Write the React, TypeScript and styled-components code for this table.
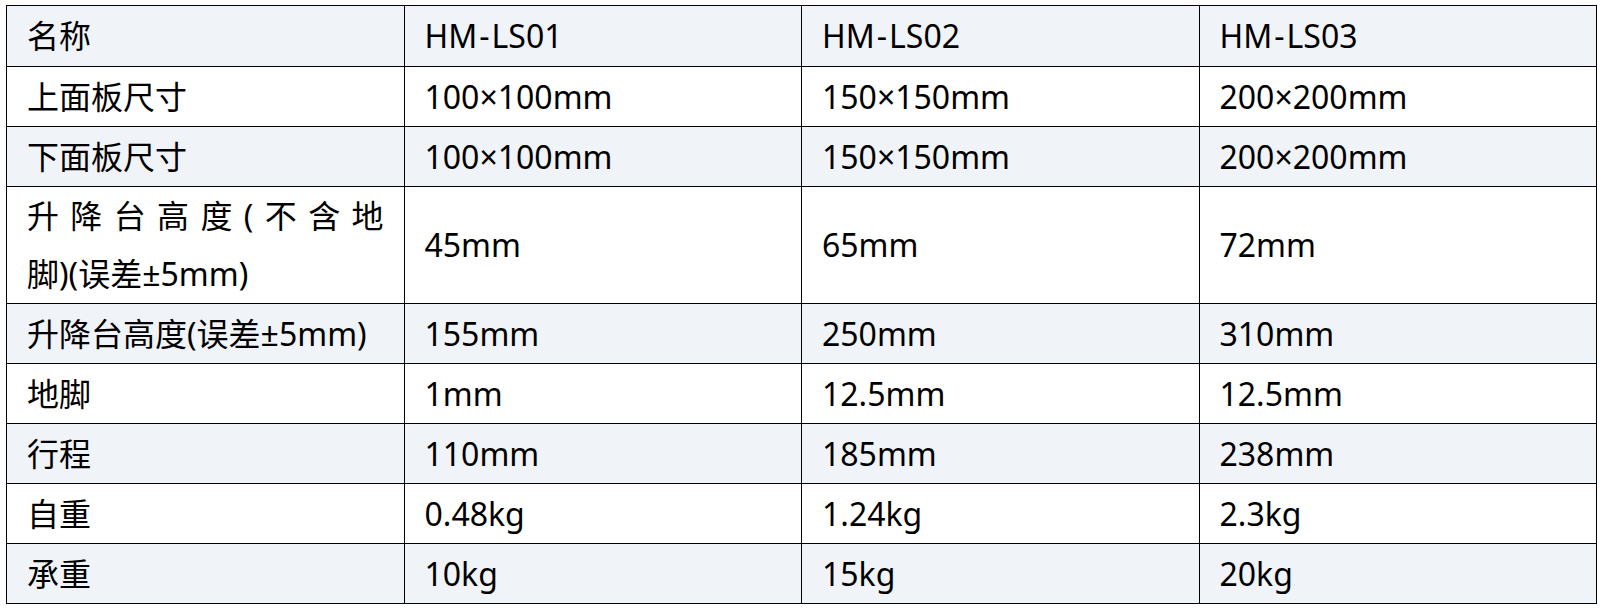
import React from 'react';
import styled, { createGlobalStyle } from 'styled-components';

interface SpecRow {
    label: string;
    // the one label that wraps: first line is spread out, second is left as is
    split?: [string, string];
    values: string[];
}

const rows: SpecRow[] = [
    { label: '上面板尺寸', values: ['100×100mm', '150×150mm', '200×200mm'] },
    { label: '下面板尺寸', values: ['100×100mm', '150×150mm', '200×200mm'] },
    {
        label: '升降台高度(不含地脚)(误差±5mm)',
        split: ['升降台高度(不含地', '脚)(误差±5mm)'],
        values: ['45mm', '65mm', '72mm'],
    },
    { label: '升降台高度(误差±5mm)', values: ['155mm', '250mm', '310mm'] },
    { label: '地脚', values: ['1mm', '12.5mm', '12.5mm'] },
    { label: '行程', values: ['110mm', '185mm', '238mm'] },
    { label: '自重', values: ['0.48kg', '1.24kg', '2.3kg'] },
    { label: '承重', values: ['10kg', '15kg', '20kg'] },
];

const models = ['HM-LS01', 'HM-LS02', 'HM-LS03'];

const App: React.FC = () => {
    return (
        <>
            <GlobalStyle />
            <Page>
                <SpecTable>
                    <colgroup>
                        <col />
                        <col />
                        <col />
                        <col />
                    </colgroup>
                    <thead>
                        <Row $shaded>
                            <HeadCell>名称</HeadCell>
                            {models.map(m => {
                                const [prefix, suffix] = m.split('-');
                                return (
                                    <HeadCell key={m}>
                                        {prefix}<Dash>-</Dash>{suffix}
                                    </HeadCell>
                                );
                            })}
                        </Row>
                    </thead>
                    <tbody>
                        {rows.map((row, i) => {
                            const tall = !!row.split;
                            return (
                                // header is shaded, then every other row
                                <Row key={i} $shaded={i % 2 === 1}>
                                    <Cell $tall={tall}>
                                        {row.split ? (
                                            <>
                                                <JustifiedLine>{row.split[0]}</JustifiedLine>
                                                <PlainLine>{row.split[1]}</PlainLine>
                                            </>
                                        ) : row.label}
                                    </Cell>
                                    {row.values.map((v, j) => (
                                        <Cell key={j} $tall={tall}>{v}</Cell>
                                    ))}
                                </Row>
                            );
                        })}
                    </tbody>
                </SpecTable>
            </Page>
        </>
    );
};

// Styled Components
const GlobalStyle = createGlobalStyle`
    html, body {
        margin: 0;
        padding: 0;
        background: #fff;
    }
    body {
        font-family: 'Noto Sans', 'Noto Sans CJK SC', sans-serif;
        color: #000;
    }
`;

const Page = styled.div`
    padding: 5px 6px;
`;

const SpecTable = styled.table`
    width: 1591px;
    border-collapse: collapse;
    table-layout: fixed;
    border: 1px solid #000;

    col {
        width: 25%;
    }
`;

const Row = styled.tr<{ $shaded?: boolean }>`
    background: ${props => props.$shaded ? '#f0f3f8' : '#fff'};
`;

const HeadCell = styled.th`
    height: 60px;
    padding: 0 20px;
    border: 1px solid #000;
    font-size: 32px;
    font-weight: 400;
    text-align: left;
    vertical-align: middle;
    line-height: 40px;
`;

const Dash = styled.span`
    padding: 0 2px;
`;

const Cell = styled.td<{ $tall?: boolean }>`
    height: ${props => props.$tall ? '116px' : '59px'};
    padding: 0 20px;
    border: 1px solid #000;
    font-size: 32px;
    text-align: left;
    vertical-align: middle;
    line-height: ${props => props.$tall ? '58px' : '40px'};
    white-space: nowrap;
`;

const JustifiedLine = styled.span`
    display: block;
    text-align: justify;
    text-align-last: justify;
    white-space: normal;
`;

const PlainLine = styled.span`
    display: block;
`;

export default App;
